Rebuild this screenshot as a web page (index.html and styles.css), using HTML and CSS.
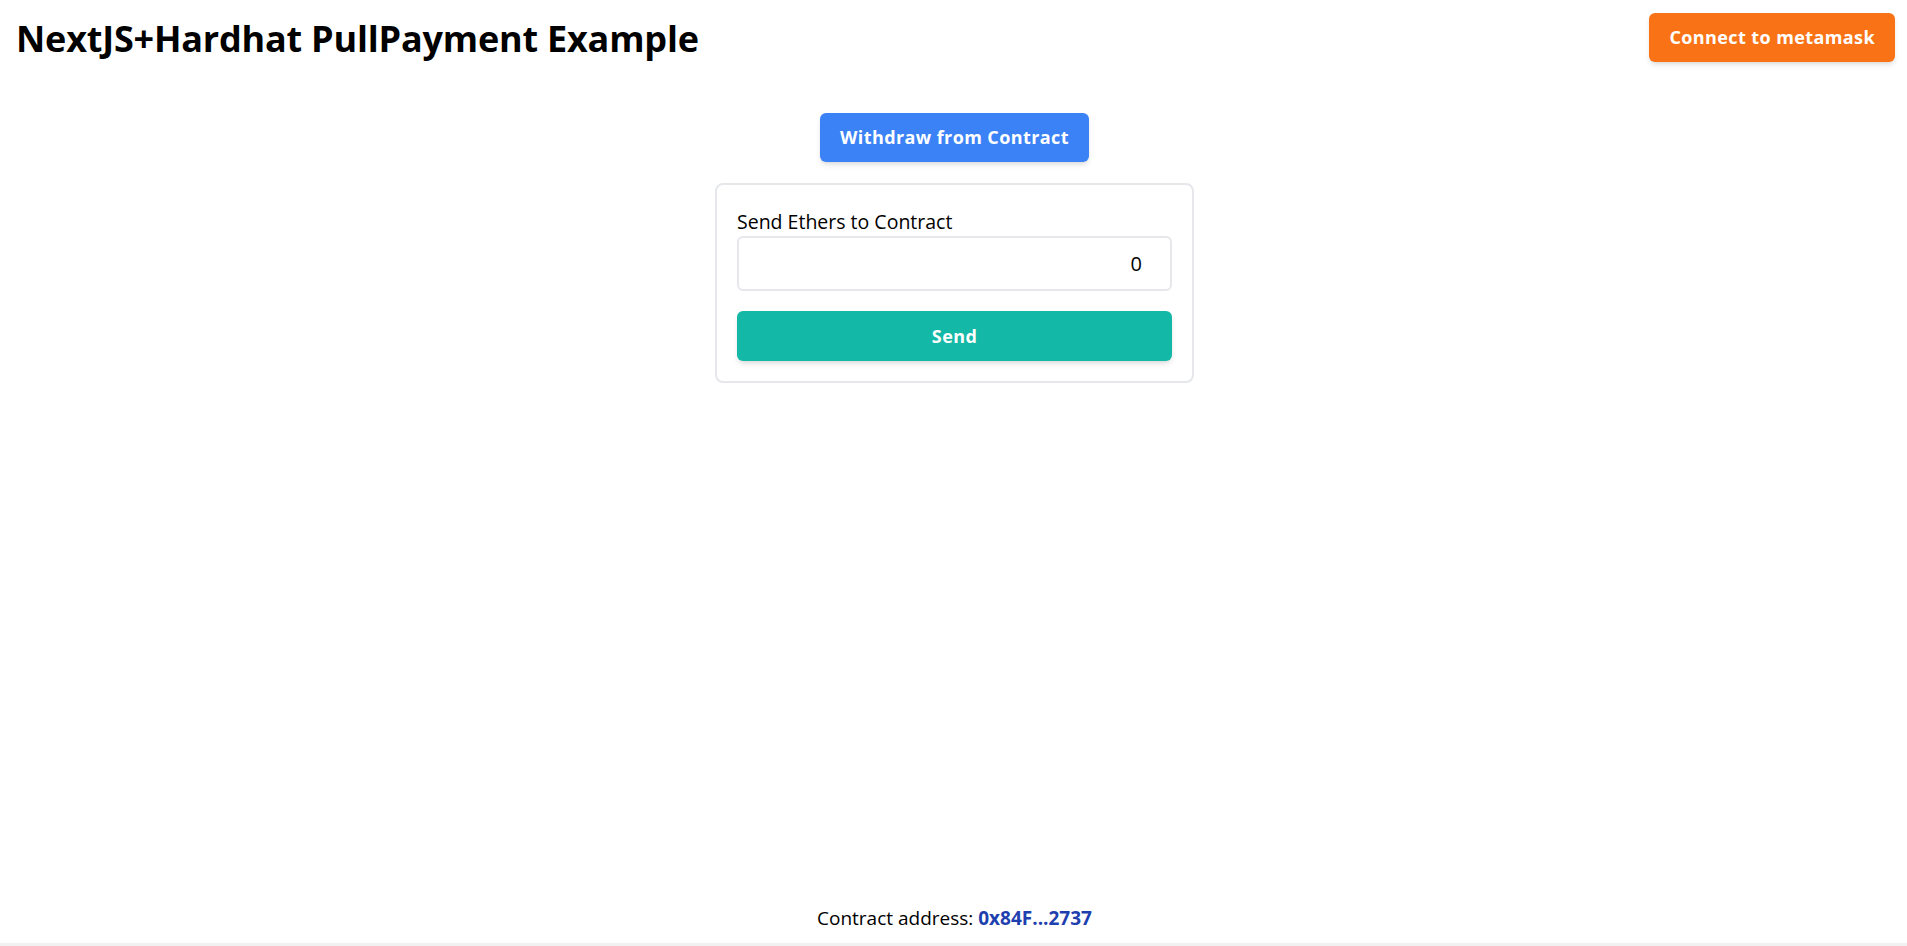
FILE: index.html
```html
<!DOCTYPE html>
<html lang="en">
<head>
<meta charset="utf-8">
<title>NextJS+Hardhat PullPayment Example</title>
<link rel="stylesheet" href="styles.css">
</head>
<body>
<div class="page">
  <header class="header">
    <h1 class="title">NextJS+Hardhat PullPayment Example</h1>
    <button class="btn btn-orange">Connect to metamask</button>
  </header>
  <main class="main">
    <button class="btn btn-blue">Withdraw from Contract</button>
    <div class="card">
      <label class="label" for="amount">Send Ethers to Contract</label>
      <input id="amount" class="input" type="number" value="0">
      <button class="btn btn-teal">Send</button>
    </div>
  </main>
  <footer class="footer">
    Contract address: <span class="address">0x84F...2737</span>
  </footer>
</div>
</body>
</html>
```
FILE: styles.css
```css
* { box-sizing: border-box; }
html, body { margin: 0; padding: 0; background: #ffffff; }
body {
  font-family: "Open Sans", "Noto Sans", sans-serif;
  color: #000;
}
.page {
  height: 100vh;
  display: flex;
  flex-direction: column;
  border-bottom: 3px solid #f1f1f1;
  overflow: hidden;
}
.header {
  display: flex;
  justify-content: space-between;
  align-items: flex-start;
  padding: 13px 12px 0 16px;
}
.title {
  margin: 6px 0 0;
  font-size: 36px;
  line-height: 40px;
  font-weight: 700;
  letter-spacing: -0.2px;
}
.btn {
  font-family: inherit;
  font-size: 18px;
  line-height: 29px;
  font-weight: 700;
  letter-spacing: 0.4px;
  color: #ffffff;
  border: none;
  border-radius: 6px;
  padding: 10px 20px;
  box-shadow: 0 4px 6px -1px rgba(0,0,0,0.1), 0 2px 4px -2px rgba(0,0,0,0.1);
  cursor: pointer;
}
.btn-orange { background: #f97316; }
.btn-blue { background: #3b82f6; }
.btn-teal { background: #14b8a6; width: 100%; margin-top: 20px; height: 50px; }
.main {
  flex: 1;
  display: flex;
  flex-direction: column;
  align-items: center;
  padding-top: 51px;
  padding-left: 2px;
}
.card {
  margin-top: 21px;
  width: 479px;
  border: 2px solid #e5e7eb;
  border-radius: 8px;
  padding: 20px;
  display: flex;
  flex-direction: column;
}
.label {
  display: block;
  font-size: 19.5px;
  font-weight: 500;
  line-height: 28px;
  padding-top: 3px;
}
.input {
  height: 55px;
  width: 100%;
  border: 2px solid #e5e7eb;
  border-radius: 6px;
  font-family: inherit;
  font-size: 20px;
  font-weight: 400;
  text-align: right;
  padding: 0 13px 0 16px;
  color: #000;
  outline: none;
}
.footer {
  text-align: center;
  font-size: 19px;
  line-height: 28px;
  padding: 0 0 11px 2px;
}
.address {
  font-weight: 700;
  color: #1e40af;
}
```
